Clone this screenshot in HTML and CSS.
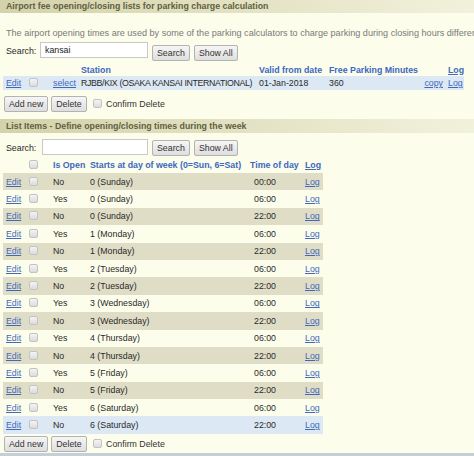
FILE: index.html
```html
<!DOCTYPE html>
<html>
<head>
<meta charset="utf-8">
<link rel="stylesheet" href="styles.css">
</head>
<body>
<div class="page">
  <h2 class="bar">Airport fee opening/closing lists for parking charge calculation</h2>
  <p class="desc">The airport opening times are used by some of the parking calculators to charge parking during closing hours differently</p>
  <div class="search">
    <span class="lbl">Search:</span>
    <input class="txt" type="text" value="kansai">
    <button class="btn">Search</button>
    <button class="btn">Show All</button>
  </div>
  <table class="grid g1">
    <colgroup>
      <col class="c-edit"><col class="c-chk"><col class="c-sel"><col class="c-st"><col class="c-valid"><col class="c-free"><col class="c-copy"><col class="c-log">
    </colgroup>
    <thead>
      <tr class="head"><th></th><th></th><th></th><th>Station</th><th>Valid from date</th><th>Free Parking Minutes</th><th></th><th><a href="#">Log</a></th></tr>
    </thead>
    <tbody>
      <tr class="sel"><td><a href="#">Edit</a></td><td><input type="checkbox" class="cb"></td><td><a href="#">select</a></td><td class="st">RJBB/KIX (OSAKA KANSAI INTERNATIONAL)</td><td>01-Jan-2018</td><td>360</td><td class="r"><a href="#">copy</a></td><td><a href="#">Log</a></td></tr>
    </tbody>
  </table>
  <div class="actions a1">
    <button class="btn">Add new</button>
    <button class="btn">Delete</button>
    <label class="confirm"><input type="checkbox" class="cb"> Confirm Delete</label>
  </div>

  <h2 class="bar bar2">List Items - Define opening/closing times during the week</h2>
  <div class="search s2">
    <span class="lbl">Search:</span>
    <input class="txt" type="text" value="">
    <button class="btn">Search</button>
    <button class="btn">Show All</button>
  </div>
  <table class="grid g2">
    <colgroup>
      <col class="d-edit"><col class="d-chk"><col class="d-open"><col class="d-day"><col class="d-time"><col class="d-log">
    </colgroup>
    <thead>
      <tr class="head"><th></th><th><input type="checkbox" class="cb"></th><th>Is Open</th><th>Starts at day of week (0=Sun, 6=Sat)</th><th>Time of day</th><th><a href="#">Log</a></th></tr>
    </thead>
    <tbody>
      <tr class="alt"><td><a href="#">Edit</a></td><td><input type="checkbox" class="cb"></td><td>No</td><td>0 (Sunday)</td><td>00:00</td><td><a href="#">Log</a></td></tr>
      <tr><td><a href="#">Edit</a></td><td><input type="checkbox" class="cb"></td><td>Yes</td><td>0 (Sunday)</td><td>06:00</td><td><a href="#">Log</a></td></tr>
      <tr class="alt"><td><a href="#">Edit</a></td><td><input type="checkbox" class="cb"></td><td>No</td><td>0 (Sunday)</td><td>22:00</td><td><a href="#">Log</a></td></tr>
      <tr><td><a href="#">Edit</a></td><td><input type="checkbox" class="cb"></td><td>Yes</td><td>1 (Monday)</td><td>06:00</td><td><a href="#">Log</a></td></tr>
      <tr class="alt"><td><a href="#">Edit</a></td><td><input type="checkbox" class="cb"></td><td>No</td><td>1 (Monday)</td><td>22:00</td><td><a href="#">Log</a></td></tr>
      <tr><td><a href="#">Edit</a></td><td><input type="checkbox" class="cb"></td><td>Yes</td><td>2 (Tuesday)</td><td>06:00</td><td><a href="#">Log</a></td></tr>
      <tr class="alt"><td><a href="#">Edit</a></td><td><input type="checkbox" class="cb"></td><td>No</td><td>2 (Tuesday)</td><td>22:00</td><td><a href="#">Log</a></td></tr>
      <tr><td><a href="#">Edit</a></td><td><input type="checkbox" class="cb"></td><td>Yes</td><td>3 (Wednesday)</td><td>06:00</td><td><a href="#">Log</a></td></tr>
      <tr class="alt"><td><a href="#">Edit</a></td><td><input type="checkbox" class="cb"></td><td>No</td><td>3 (Wednesday)</td><td>22:00</td><td><a href="#">Log</a></td></tr>
      <tr><td><a href="#">Edit</a></td><td><input type="checkbox" class="cb"></td><td>Yes</td><td>4 (Thursday)</td><td>06:00</td><td><a href="#">Log</a></td></tr>
      <tr class="alt"><td><a href="#">Edit</a></td><td><input type="checkbox" class="cb"></td><td>No</td><td>4 (Thursday)</td><td>22:00</td><td><a href="#">Log</a></td></tr>
      <tr><td><a href="#">Edit</a></td><td><input type="checkbox" class="cb"></td><td>Yes</td><td>5 (Friday)</td><td>06:00</td><td><a href="#">Log</a></td></tr>
      <tr class="alt"><td><a href="#">Edit</a></td><td><input type="checkbox" class="cb"></td><td>No</td><td>5 (Friday)</td><td>22:00</td><td><a href="#">Log</a></td></tr>
      <tr><td><a href="#">Edit</a></td><td><input type="checkbox" class="cb"></td><td>Yes</td><td>6 (Saturday)</td><td>06:00</td><td><a href="#">Log</a></td></tr>
      <tr class="sel"><td><a href="#">Edit</a></td><td><input type="checkbox" class="cb"></td><td>No</td><td>6 (Saturday)</td><td>22:00</td><td><a href="#">Log</a></td></tr>
    </tbody>
  </table>
  <div class="actions a2">
    <button class="btn">Add new</button>
    <button class="btn">Delete</button>
    <label class="confirm"><input type="checkbox" class="cb"> Confirm Delete</label>
  </div>
</div>
<div class="footer"></div>
</body>
</html>
```
FILE: styles.css
```css
html, body {
  margin: 0;
  padding: 0;
  background: #fcfdeb;
  height: 100%;
  overflow: hidden;
}
body {
  font-family: "Liberation Sans", Arial, sans-serif;
  font-size: 8.8px;
  color: #2a2a2a;
  display: flex;
  flex-direction: column;
}
.page {
  flex: 1;
  overflow: hidden;
}
.footer {
  height: 3px;
  background: #c6ced6;
}
a { color: #4069bb; }
.bar {
  margin: 0;
  height: 13px;
  line-height: 13px;
  padding-left: 6px;
  font-size: 8.8px;
  font-weight: bold;
  color: #5e6140;
  background: linear-gradient(to right, #d4d2ab 0%, #e2e0c0 45%, #f2f1dc 100%);
  white-space: nowrap;
  overflow: hidden;
}
.bar2 {
  margin-top: 7px;
  height: 14px;
  line-height: 14px;
}
.desc {
  margin: 13px 0 0 6px;
  color: #7a7a7a;
  font-size: 9.1px;
  white-space: nowrap;
  line-height: 14px;
  height: 14px;
}
.search {
  display: flex;
  align-items: flex-start;
  margin-top: 2px;
  padding-left: 6px;
  height: 21px;
}
.s2 { margin-top: 6px; height: 18px; }
.lbl {
  margin-top: 4px;
  width: 34px;
}
.s2 .lbl { width: 36px; }
.s2 .txt { width: 106px; }
.txt {
  box-sizing: border-box;
  width: 108px;
  height: 16px;
  margin: 0 4px 0 0;
  border: 1px solid #c9c9c9;
  background: #fff;
  font: 8.8px "Liberation Sans", Arial, sans-serif;
  padding: 0 4px;
  color: #222;
}
.search .btn { margin-top: 3px; }
.s2 .btn { margin-top: 1px; }
.btn {
  box-sizing: border-box;
  height: 16px;
  padding: 0 4px;
  margin: 0 4px 0 0;
  border: 1px solid #b3b3b3;
  border-radius: 2px;
  background: linear-gradient(#f6f6f6, #dedede);
  font: 8.8px "Liberation Sans", Arial, sans-serif;
  color: #333;
}
.cb {
  appearance: none;
  -webkit-appearance: none;
  box-sizing: border-box;
  width: 9px;
  height: 9px;
  margin: 0;
  border: 1px solid #c3c3c3;
  border-radius: 2px;
  background: linear-gradient(#f4f4f4, #dcdcdc);
  vertical-align: -1px;
}
.grid {
  border-collapse: collapse;
  table-layout: fixed;
  margin-left: 3px;
}
.grid th, .grid td {
  padding: 0 0 0 3px;
  text-align: left;
  white-space: nowrap;
  overflow: hidden;
}
.grid th {
  color: #3a68c2;
  font-weight: bold;
}
.g1 { width: 461px; }
.g1 .head { height: 13px; }
.g1 tbody tr { height: 14px; }
.g1 td.st { letter-spacing: -0.35px; }
.c-edit { width: 23px; }
.c-chk { width: 24px; }
.c-sel { width: 28px; }
.c-st { width: 178px; }
.c-valid { width: 70px; }
.c-free { width: 94px; }
.c-copy { width: 25px; }
.c-log { width: 19px; }
.g1 td.r { text-align: right; padding-right: 2px; }
tr.sel { background: #dce8f4; }
.actions {
  display: flex;
  align-items: center;
  padding-left: 4px;
  height: 17px;
}
.a1 { margin-top: 5px; }
.a2 { margin-top: 2px; }
.actions .btn { margin-right: 3px; }
.confirm {
  margin-left: 3px;
  color: #333;
}
.confirm .cb { margin-right: 2px; }
.g2 { width: 320px; margin-top: 0; }
.g2 .head { height: 16px; }
.g2 tbody tr { height: 17.4px; }
.g2 tr.alt { background: #e0ddc6; }
.g2 tr.sel { background: #dce8f4; }
.d-edit { width: 23px; }
.d-chk { width: 24px; }
.d-open { width: 37px; }
.d-day { width: 160px; }
.d-time { width: 55px; }
.d-log { width: 21px; }
.g2 td:nth-child(5) { padding-left: 7px; }
```
